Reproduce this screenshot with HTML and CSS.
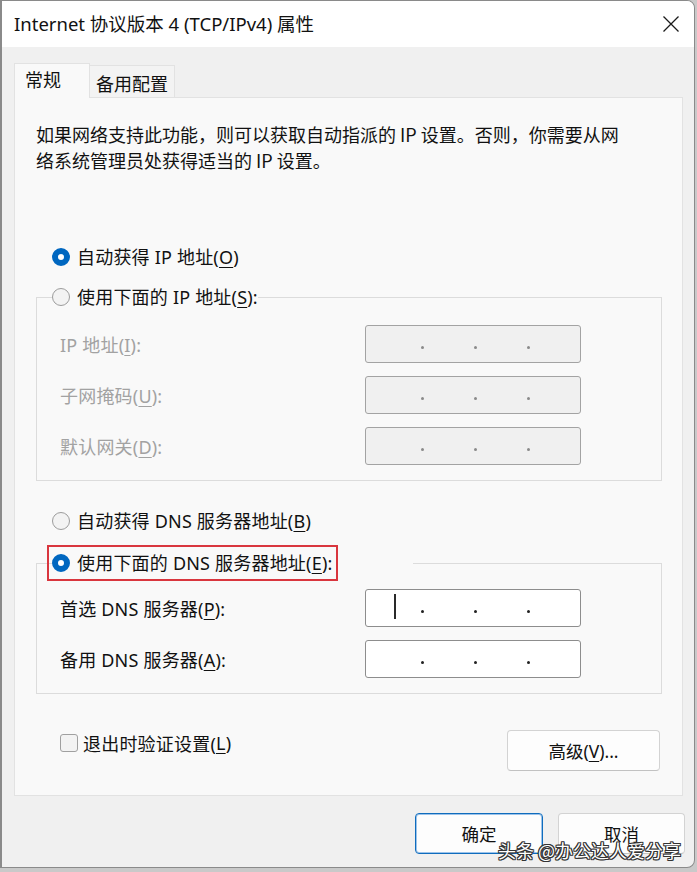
FILE: index.html
```html
<!DOCTYPE html>
<html lang="zh-CN">
<head>
    <meta charset="UTF-8">
    <title>Internet 协议版本 4 (TCP/IPv4) 属性</title>
    <link rel="stylesheet" href="styles.css">
</head>
<body>
    <div class="window">
        <div class="titlebar">
            <span class="title">Internet 协议版本 4 (TCP/IPv4) 属性</span>
            <svg class="close" width="16" height="16" viewBox="0 0 16 16">
                <path d="M0.5 0.5L15.5 15.5M15.5 0.5L0.5 15.5" stroke="#1a1a1a" stroke-width="1.3" fill="none"/>
            </svg>
        </div>
        <div class="content">
            <div class="tabs">
                <div class="tab active">常规</div>
                <div class="tab">备用配置</div>
            </div>
            <div class="panel">
                <p class="desc">如果网络支持此功能，则可以获取自动指派的 IP 设置。否则，你需要从网<br>络系统管理员处获得适当的 IP 设置。</p>

                <label class="option first"><span class="radio checked"></span>自动获得 IP 地址(<u>O</u>)</label>

                <fieldset class="group group-ip">
                    <legend><label class="option"><span class="radio"></span>使用下面的 IP 地址(<u>S</u>):</label></legend>
                    <div class="field disabled">
                        <span class="label">IP 地址(<u>I</u>):</span>
                        <div class="ip"><span class="oct"></span><i></i><span class="oct"></span><i></i><span class="oct"></span><i></i><span class="oct"></span></div>
                    </div>
                    <div class="field disabled">
                        <span class="label">子网掩码(<u>U</u>):</span>
                        <div class="ip"><span class="oct"></span><i></i><span class="oct"></span><i></i><span class="oct"></span><i></i><span class="oct"></span></div>
                    </div>
                    <div class="field disabled">
                        <span class="label">默认网关(<u>D</u>):</span>
                        <div class="ip"><span class="oct"></span><i></i><span class="oct"></span><i></i><span class="oct"></span><i></i><span class="oct"></span></div>
                    </div>
                </fieldset>

                <label class="option dns-auto"><span class="radio"></span>自动获得 DNS 服务器地址(<u>B</u>)</label>

                <fieldset class="group group-dns">
                    <legend><label class="option marked"><span class="radio checked"></span>使用下面的 DNS 服务器地址(<u>E</u>):</label></legend>
                    <div class="field">
                        <span class="label">首选 DNS 服务器(<u>P</u>):</span>
                        <div class="ip"><span class="oct"><span class="caret"></span></span><i></i><span class="oct"></span><i></i><span class="oct"></span><i></i><span class="oct"></span></div>
                    </div>
                    <div class="field">
                        <span class="label">备用 DNS 服务器(<u>A</u>):</span>
                        <div class="ip"><span class="oct"></span><i></i><span class="oct"></span><i></i><span class="oct"></span><i></i><span class="oct"></span></div>
                    </div>
                </fieldset>

                <div class="bottom-row">
                    <label class="check"><span class="box"></span>退出时验证设置(<u>L</u>)</label>
                    <button class="btn advanced">高级(<u>V</u>)...</button>
                </div>
            </div>
            <div class="actions">
                <button class="btn primary">确定</button>
                <button class="btn">取消</button>
            </div>
        </div>
        <div class="watermark">头条 @办公达人爱分享</div>
    </div>
</body>
</html>
```

FILE: styles.css
```css
*{
    box-sizing: border-box;
}
body{
    margin: 0;
    background-color: #c9c9c9;
    font-family: "Noto Sans", "Noto Sans CJK SC", sans-serif;
    color: #111;
}
.window{
    position: relative;
    width: 695px;
    height: 868px;
    border: 1px solid #8a8a8a;
    border-left-width: 2px;
    border-radius: 0 8px 8px 0;
    overflow: hidden;
    background-color: #f0f0f0;
    display: flex;
    flex-direction: column;
}
.titlebar{
    height: 46px;
    flex-shrink: 0;
    background-color: #fff;
    display: flex;
    align-items: center;
    justify-content: space-between;
    padding: 0 15px 0 12px;
}
.title{
    font-size: 18.5px;
    line-height: 24px;
}
.close{
    display: block;
}
.content{
    flex: 1;
    padding: 16px 9px 0 12px;
    display: flex;
    flex-direction: column;
}
.tabs{
    display: flex;
    align-items: flex-end;
    height: 34px;
    font-family: "Noto Sans CJK SC", sans-serif;
    font-size: 18px;
}
.tab{
    height: 32px;
    width: 86px;
    margin-left: -1px;
    border: 1px solid #e2e2e2;
    border-bottom: none;
    background-color: #f3f3f3;
    display: flex;
    align-items: center;
    justify-content: center;
    padding-top: 2px;
}
.tab.active{
    position: relative;
    z-index: 1;
    margin-left: 0;
    width: 76px;
    height: 35px;
    margin-bottom: -1px;
    background-color: #f9f9f9;
    justify-content: flex-start;
    padding: 0 0 4px 10px;
}
.panel{
    margin-right: 2px;
    background-color: #f9f9f9;
    border: 1px solid #e2e2e2;
    padding: 0 20px 24px 21px;
    font-size: 18px;
    letter-spacing: 0.2px;
}
.desc{
    margin: 23px 0 0 0;
    line-height: 26px;
    font-family: "Noto Sans CJK SC", sans-serif;
    font-size: 18px;
    letter-spacing: 0;
}
.option{
    display: flex;
    align-items: center;
    height: 26px;
    line-height: 26px;
    white-space: nowrap;
}
.option.first{
    margin: 71px 0 0 16px;
}
.option.dns-auto{
    margin: 27px 0 0 16px;
}
.radio{
    width: 18px;
    height: 18px;
    border-radius: 50%;
    border: 1px solid #9c9c9c;
    background-color: #f3f3f3;
    margin-right: 7px;
    flex-shrink: 0;
}
.radio.checked{
    border: 6px solid #0067c0;
    background-color: #fff;
}
.group{
    margin: 14px 0 0 0;
    border: 1px solid #dcdcdc;
    padding: 15px 0 15px 15px;
    min-inline-size: 0;
}
.group legend{
    padding: 0;
}
.group-dns{
    margin-top: 16px;
    padding-top: 13px;
}
.group-dns legend{
    padding-right: 80px;
}
.marked{
    outline: 2px solid #d9363e;
    outline-offset: 3px;
}
.field{
    display: flex;
    align-items: center;
    height: 38px;
    padding-left: 8px;
}
.field + .field{
    margin-top: 13px;
}
.label{
    width: 305px;
    white-space: nowrap;
}
.disabled .label{
    color: #a2a2a2;
}
.ip{
    width: 216px;
    height: 38px;
    border: 1px solid #8d8d8d;
    border-radius: 3px;
    background-color: #fff;
    display: flex;
    align-items: center;
}
.disabled .ip{
    border-color: #a3a3a3;
    background-color: #f0f0f0;
}
.oct{
    width: 50px;
    height: 100%;
    display: flex;
    align-items: center;
}
.oct:first-child{
    width: 55px;
    padding-left: 28px;
}
.ip i{
    width: 3px;
    height: 3px;
    border-radius: 50%;
    background-color: #222;
    margin-top: 7px;
}
.disabled .ip i{
    background-color: #8a8a8a;
}
.caret{
    width: 2px;
    height: 25px;
    background-color: #2a2a2a;
    margin-top: -4px;
}
.bottom-row{
    margin-top: 36px;
    display: flex;
    justify-content: space-between;
    align-items: flex-start;
}
.check{
    display: flex;
    align-items: center;
    height: 26px;
    margin: 0 0 0 24px;
}
.box{
    width: 18px;
    height: 18px;
    border: 1px solid #a0a0a0;
    border-radius: 3px;
    background-color: #f3f3f3;
    margin-right: 5px;
}
.btn{
    font-family: "Noto Sans", "Noto Sans CJK SC", sans-serif;
    font-size: 17.5px;
    color: #111;
    background-color: #fdfdfd;
    border: 1px solid #d3d3d3;
    border-bottom-color: #c2c2c2;
    border-radius: 4px;
    height: 41px;
    width: 127px;
    padding: 0;
}
.btn.advanced{
    width: 153px;
    margin-right: 2px;
}
.actions{
    margin-top: 17px;
    display: flex;
    justify-content: flex-end;
    gap: 15px;
}
.btn.primary{
    width: 128px;
    border: 1px solid #0f6cbd;
    box-shadow: inset 0 0 0 1px #9cc3ea;
}
u{
    text-underline-offset: 3px;
}
.watermark{
    position: absolute;
    right: 13px;
    bottom: 4px;
    font-family: "Noto Sans CJK SC", sans-serif;
    font-size: 18px;
    color: #fff;
    text-shadow: 1px 0 0 #333, -1px 0 0 #333, 0 1px 0 #333, 0 -1px 0 #333, 1px 1px 0 #333, -1px -1px 0 #333, 1px -1px 0 #333, -1px 1px 0 #333;
}
```
